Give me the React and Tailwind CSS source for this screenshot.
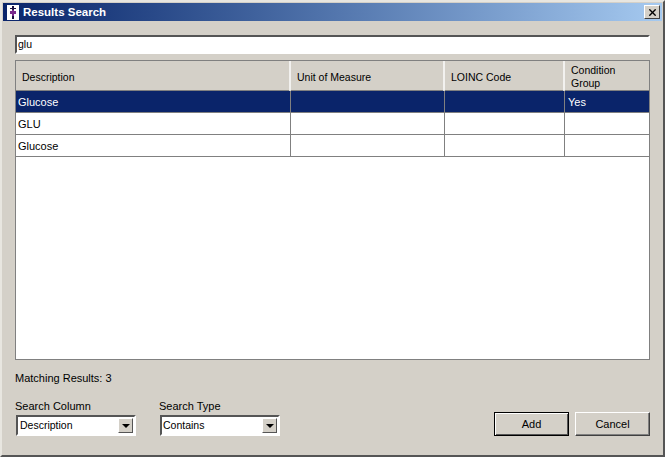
import { X } from "lucide-react";

const rows = [
  { description: "Glucose", unit: "", loinc: "", condition: "Yes", selected: true },
  { description: "GLU", unit: "", loinc: "", condition: "" },
  { description: "Glucose", unit: "", loinc: "", condition: "" },
];

const columns = "grid grid-cols-[275px_154px_120px_85px]";

function AppIcon() {
  return (
    <svg width="12" height="15" viewBox="0 0 12 15" className="shrink-0">
      <rect width="12" height="15" fill="#ffffff" />
      <path d="M5 1h2v13H5zM3 3h6v1H3z" fill="#1a1040" />
      <path d="M3 6h6v3H3zM5 5h2v6H5z" fill="#7a2a8c" />
    </svg>
  );
}

function HeaderCell({ children, last }) {
  return (
    <div className={`flex items-center pl-[6px] pt-[3px] leading-[13px] text-[10.5px] ${last ? "" : "border-r-2 border-r-white/70"}`}>
      {children}
    </div>
  );
}

function Combo({ value, width, inset }) {
  return (
    <div className={`${width} ${inset} ml-[1px] h-[21px] flex items-center bg-white border-2 border-t-[#555] border-l-[#555] border-r-white border-b-white pr-[1px] text-[10.5px]`}>
      <span className="flex-1">{value}</span>
      <span className="w-[15px] h-[15px] bg-[#d4d0c8] border border-t-white border-l-white border-r-[#555] border-b-[#555] flex items-center justify-center">
        <span className="w-0 h-0 border-x-[4px] border-x-transparent border-t-[4px] border-t-black" />
      </span>
    </div>
  );
}

export default function App() {
  return (
    <div className="w-[665px] h-[457px] flex flex-col bg-[#d4d0c8] border-t-2 border-l-2 border-t-[#e8e6e0] border-l-[#e8e6e0] border-r-2 border-b-2 border-r-[#555] border-b-[#555] p-[1px] text-[11px] text-black font-['Liberation_Sans',Arial,sans-serif] overflow-hidden">
      <div className="h-[18px] shrink-0 flex items-center bg-gradient-to-r from-[#0a246a] to-[#a6caf0] pl-[4px] pr-[2px]">
        <AppIcon />
        <span className="ml-[4px] pt-[1px] text-white font-bold text-[11.5px] flex-1">Results Search</span>
        <button className="w-[16px] h-[14px] flex items-center justify-center bg-[#d4d0c8] border border-t-white border-l-white border-r-[#404040] border-b-[#404040]">
          <X size={11} strokeWidth={3} color="#000000" />
        </button>
      </div>

      <div className="flex-1 flex flex-col pt-[14px] pl-[12px] pr-[12px]">
        <div className="w-[635px] h-[19px] flex items-center bg-white border-2 border-t-[#555] border-l-[#555] border-r-white border-b-white pl-[1px] text-[10.5px]">
          glu
        </div>

        <div className="mt-[6px] w-[635px] h-[300px] flex flex-col bg-white border border-[#808080]">
          <div className={`${columns} h-[30px] bg-[#d4d0c8] border-b border-b-[#808080]`}>
            <HeaderCell>Description</HeaderCell>
            <HeaderCell>Unit of Measure</HeaderCell>
            <HeaderCell>LOINC Code</HeaderCell>
            <HeaderCell last>
              <span className="pb-[1px]">
                Condition
                <br />
                Group
              </span>
            </HeaderCell>
          </div>
          {rows.map((row, i) => (
            <div
              key={i}
              className={`${columns} h-[22px] border-b border-b-[#808080] ${row.selected ? "bg-[#0a246a] text-white" : ""}`}
            >
              <div className="flex items-center pl-[2px] pt-[1px] border-r border-r-[#808080]">{row.description}</div>
              <div className="border-r border-r-[#808080]">{row.unit}</div>
              <div className="border-r border-r-[#808080]">{row.loinc}</div>
              <div className="flex items-center pl-[3px] pt-[1px]">{row.condition}</div>
            </div>
          ))}
        </div>

        <div className="mt-[11px] h-[14px] leading-[14px]">Matching Results: 3</div>

        <div className="mt-[14px] flex items-end">
          <div className="w-[144px]">
            <div className="h-[14px] leading-[14px] mb-[2px]">Search Column</div>
            <Combo value="Description" width="w-[120px]" inset="pl-[2px]" />
          </div>
          <div className="w-[335px]">
            <div className="h-[14px] leading-[14px] mb-[2px]">Search Type</div>
            <Combo value="Contains" width="w-[120px]" inset="pl-[1px]" />
          </div>
          <button className="w-[75px] h-[24px] bg-[#d4d0c8] border border-black shadow-[inset_1px_1px_0_#fff,inset_-1px_-1px_0_#555]">
            Add
          </button>
          <button className="ml-[6px] w-[75px] h-[24px] bg-[#d4d0c8] border border-t-white border-l-white border-r-[#404040] border-b-[#404040] shadow-[inset_-1px_-1px_0_#808080]">
            Cancel
          </button>
        </div>
      </div>
    </div>
  );
}
